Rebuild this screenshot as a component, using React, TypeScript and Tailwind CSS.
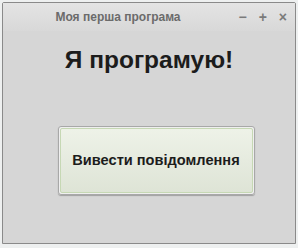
import React from "react";

export default function App() {
    return (
        <div className="w-[298px] h-[248px] bg-[#eef0f0] p-[2px] pb-[4px] font-['Liberation_Sans',Arial,sans-serif]">
            <div className="w-[294px] h-[242px] border border-[#8a8a8a] rounded-tl-[2px] rounded-tr-[2px] bg-[#d6d6d6] flex flex-col">
                <div className="h-[28px] flex items-center relative bg-gradient-to-b from-[#e4e4e4] to-[#d8d8d8]">
                    <div className="w-full text-center pr-[62px] text-[12px] font-bold text-[#6b6b6b]">
                        Моя перша програма
                    </div>
                    <div className="absolute right-[8px] top-[6px] flex gap-[12px] text-[#7a7a7a] text-[14px] font-bold leading-[16px]">
                        <span>−</span>
                        <span>+</span>
                        <span>×</span>
                    </div>
                </div>
                <h1 className="mt-[15px] text-center text-[24.5px] font-bold text-[#1c1c1c] leading-[28px]">
                    Я програмую!
                </h1>
                <div className="flex justify-center mt-[52px] pl-[14px]">
                    <button className="w-[197px] h-[69px] border border-[#a8a8a8] rounded-[3px] bg-white/60 p-px shadow-[0_1px_1px_rgba(0,0,0,0.25)]">
                        <div className="w-full h-full border border-[#c6d8b4] rounded-[2px] bg-gradient-to-b from-[#eef2e8] to-[#dee4d6] flex items-center justify-center text-[14.6px] font-bold text-[#1c1c1c]">
                            Вивести повідомлення
                        </div>
                    </button>
                </div>
            </div>
        </div>
    );
}
